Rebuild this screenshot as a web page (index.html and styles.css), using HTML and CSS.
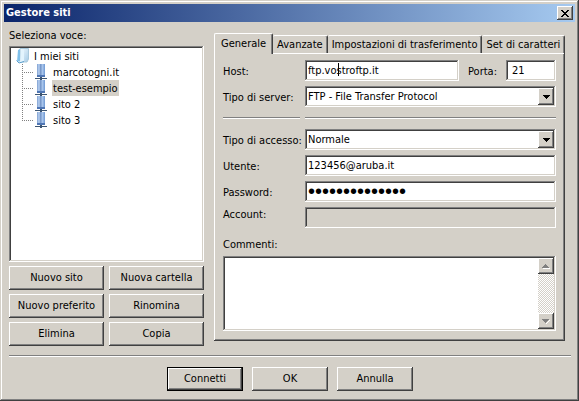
FILE: index.html
```html
<!DOCTYPE html>
<html lang="it">
<head>
    <meta charset="UTF-8">
    <meta name="viewport" content="width=device-width, initial-scale=1.0">
    <title>Gestore siti</title>
    <link rel="stylesheet" href="styles.css">
</head>
<body>
    <div class="window">
        <header class="titlebar">
            <h1>Gestore siti</h1>
            <button type="button" class="close-btn" aria-label="Chiudi">
                <svg width="8" height="7" viewBox="0 0 8 7" shape-rendering="crispEdges"><path d="M0 0h2v1h1v1h2V1h1V0h2v1H7v1H6v1H5v1h1v1h1v1h1v1H6V6H5V5H3v1H2v1H0V6h1V5h1V4h1V3H2V2H1V1H0z"/></svg>
            </button>
        </header>

        <main class="content">
            <section class="sites">
                <h2>Seleziona voce:</h2>
                <div class="tree">
                    <div class="tree-root">
                        <svg class="folder" width="14" height="16" viewBox="0 0 14 16">
                            <defs>
                                <linearGradient id="paper" x1="0" y1="0" x2="1" y2="1"><stop offset="0" stop-color="#f4fbff"/><stop offset="1" stop-color="#a5cbe6"/></linearGradient>
                            </defs>
                            <path d="M4 0.500h8.500v10.500L11 14H4z" fill="url(#paper)" stroke="#a9c9dc"/>
                            <path d="M2 2l2-1v12l-3 1z" fill="#7fc0ea"/>
                            <path d="M4 15l4-2V1L5 3z" fill="#e3f4fd"/>
                            <path d="M0.500 12.500L3 15l5-1.500" fill="none" stroke="#5c9fce"/>
                        </svg>
                        <span>I miei siti</span>
                    </div>
                    <ul>
                        <li><svg class="server"><use href="#server"/></svg><a href="#">marcotogni.it</a></li>
                        <li><svg class="server"><use href="#server"/></svg><a href="#" class="selected">test-esempio</a></li>
                        <li><svg class="server"><use href="#server"/></svg><a href="#">sito 2</a></li>
                        <li><svg class="server"><use href="#server"/></svg><a href="#">sito 3</a></li>
                    </ul>
                </div>
                <div class="site-buttons">
                    <button type="button">Nuovo sito</button>
                    <button type="button">Nuova cartella</button>
                    <button type="button">Nuovo preferito</button>
                    <button type="button">Rinomina</button>
                    <button type="button">Elimina</button>
                    <button type="button">Copia</button>
                </div>
            </section>

            <section class="settings">
                <div class="tabs" role="tablist">
                    <button type="button" class="tab active" role="tab" aria-selected="true">Generale</button>
                    <button type="button" class="tab" role="tab">Avanzate</button>
                    <button type="button" class="tab" role="tab">Impostazioni di trasferimento</button>
                    <button type="button" class="tab" role="tab">Set di caratteri</button>
                </div>
                <form class="panel">
                    <div class="row">
                        <label for="host">Host:</label>
                        <div class="host-fields">
                            <div class="field">
                                <input type="text" id="host" value="ftp.vostroftp.it">
                                <span class="caret"></span>
                            </div>
                            <label for="port">Porta:</label>
                            <input type="text" id="port" class="port" value="21">
                        </div>
                    </div>
                    <div class="row">
                        <label for="server-type">Tipo di server:</label>
                        <div class="field">
                            <select id="server-type"><option>FTP - File Transfer Protocol</option></select>
                            <span class="arrow-btn drop"><svg width="7" height="4" viewBox="0 0 7 4" shape-rendering="crispEdges"><path d="M0 0h7v1H6v1H5v1H4v1H3V3H2V2H1V1H0z"/></svg></span>
                        </div>
                    </div>
                    <div class="row divider">
                        <span class="line"></span>
                        <span class="line"></span>
                    </div>
                    <div class="row">
                        <label for="access">Tipo di accesso:</label>
                        <div class="field">
                            <select id="access"><option>Normale</option></select>
                            <span class="arrow-btn drop"><svg width="7" height="4" viewBox="0 0 7 4" shape-rendering="crispEdges"><path d="M0 0h7v1H6v1H5v1H4v1H3V3H2V2H1V1H0z"/></svg></span>
                        </div>
                    </div>
                    <div class="row">
                        <label for="user">Utente:</label>
                        <input type="text" id="user" value="123456@aruba.it">
                    </div>
                    <div class="row">
                        <label for="pass">Password:</label>
                        <input type="password" id="pass" value="abcdefghilmnop">
                    </div>
                    <div class="row account">
                        <label for="account">Account:</label>
                        <input type="text" id="account" disabled>
                    </div>
                    <label for="comments" class="comments-label">Commenti:</label>
                    <div class="comments">
                        <textarea id="comments"></textarea>
                        <div class="scrollbar">
                            <span class="arrow-btn"><svg width="8" height="5" viewBox="0 0 8 5" shape-rendering="crispEdges"><path d="M1 4h7v1H1z" fill="#fff"/><path d="M3 0h1v1h1v1h1v1h1v1H0V3h1V2h1V1h1z" fill="#808080"/></svg></span>
                            <span class="arrow-btn"><svg width="8" height="5" viewBox="0 0 8 5" shape-rendering="crispEdges"><path d="M7 1h1v1H7v1H6v1H5v1H4V4h1V3h1V2h1z" fill="#fff"/><path d="M0 0h7v1H6v1H5v1H4v1H3V3H2V2H1V1H0z" fill="#808080"/></svg></span>
                        </div>
                    </div>
                </form>
            </section>
        </main>

        <footer class="actions">
            <button type="button" class="default">Connetti</button>
            <button type="button">OK</button>
            <button type="button">Annulla</button>
        </footer>
    </div>

    <svg width="0" height="0" class="symbols">
        <linearGradient id="case" x1="0" y1="0" x2="1" y2="0"><stop offset="0" stop-color="#7f9fd0"/><stop offset="0.25" stop-color="#b9d2f2"/><stop offset="0.5" stop-color="#6486bd"/><stop offset="0.62" stop-color="#b4cff2"/><stop offset="1" stop-color="#6f98d2"/></linearGradient>
        <symbol id="server" viewBox="0 0 12 16">
            <rect x="2" y="0" width="8" height="13" fill="url(#case)"/>
            <path d="M2 11h8v2H2z" fill="#4e75b3"/>
            <path d="M5 13h2v1h5v1H7v1H5v-1H0v-1h5z" fill="#3c5572"/>
        </symbol>
    </svg>
</body>
</html>
```
FILE: styles.css
```css
* {
    box-sizing: border-box;
}

body {
    margin: 0;
    background: #d4d0c8;
    color: #000;
    font-family: "DejaVu Sans Condensed", "DejaVu Sans", sans-serif;
    font-size: 11px;
    line-height: 14px;
}

h1, h2 {
    margin: 0;
    font-size: 11px;
}

button, input, select, textarea {
    margin: 0;
    font: inherit;
    color: inherit;
    border: none;
    border-radius: 0;
    outline: none;
}

.window {
    display: flex;
    flex-direction: column;
    min-height: 100vh;
    padding: 4px;
    box-shadow: inset -1px -1px #404040, inset 1px 1px #d4d0c8, inset -2px -2px #808080, inset 2px 2px #fff;
}

/* title bar */
.titlebar {
    display: flex;
    align-items: center;
    justify-content: space-between;
    height: 18px;
    padding: 0 2px;
    background: linear-gradient(to right, #0a246a, #a6caf0);
    color: #fff;
}

.close-btn {
    display: flex;
    align-items: center;
    justify-content: center;
    width: 16px;
    height: 14px;
    padding: 0;
    color: #000;
}

/* raised surfaces */
button, .arrow-btn {
    background: #d4d0c8;
    box-shadow: inset -1px -1px #404040, inset 1px 1px #fff, inset -2px -2px #808080;
}

/* sunken surfaces */
input, select, .tree, .comments {
    background: #fff;
    box-shadow: inset -1px -1px #fff, inset 1px 1px #808080, inset -2px -2px #d4d0c8, inset 2px 2px #404040;
}

.content {
    display: grid;
    grid-template-columns: 195px 1fr;
    gap: 10px;
    padding: 7px 10px 0 5px;
}

.sites {
    display: flex;
    flex-direction: column;
}

.sites h2 {
    font-weight: normal;
    margin-bottom: 3px;
}

.tree {
    flex: 1;
    padding: 2px;
}

.tree-root {
    display: flex;
    align-items: center;
    gap: 4px;
    height: 16px;
    padding-left: 5px;
}

.tree-root span {
    padding-top: 1px;
}

.tree ul {
    list-style: none;
    margin: 0;
    padding: 0 0 0 11px;
}

.tree li {
    display: flex;
    align-items: center;
    height: 16px;
    background:
        repeating-linear-gradient(to right, #808080 0 1px, transparent 1px 2px) 0 8px / 12px 1px no-repeat,
        repeating-linear-gradient(to bottom, #808080 0 1px, transparent 1px 2px) 0 0 / 1px 16px no-repeat;
}

.tree li:last-child {
    background-size: 12px 1px, 1px 9px;
}

.server {
    width: 12px;
    height: 16px;
    margin: 0 5px 0 13px;
}

.tree a {
    padding: 2px 1px 0;
    color: #000;
    text-decoration: none;
}

.tree a.selected {
    background: #d4d0c8;
}

.site-buttons {
    display: grid;
    grid-template-columns: 1fr 1fr;
    gap: 4px 5px;
    margin-top: 4px;
}

.site-buttons button,
.actions button {
    height: 24px;
    padding: 0;
}

/* tabs */
.settings {
    min-width: 0;
    padding: 4px 0 5px;
}

.tabs {
    display: flex;
    align-items: flex-end;
}

.tab {
    height: 18px;
    padding: 0 4px;
    border-top: 1px solid #fff;
    border-right: 1px solid #404040;
    border-radius: 2px 2px 0 0;
    box-shadow: inset -1px 0 #808080;
    white-space: nowrap;
}

.tab.active {
    height: 21px;
    margin-bottom: -1px;
    padding: 0 6px 1px;
    border-left: 1px solid #fff;
    z-index: 1;
}

.panel {
    padding: 7px 9px 10px;
    box-shadow: inset -1px -1px #404040, inset 1px 1px #fff, inset -2px -2px #808080;
}

.row {
    display: grid;
    grid-template-columns: 77px 1fr;
    gap: 5px;
    align-items: center;
    height: 21px;
    margin-bottom: 5px;
    white-space: nowrap;
}

.row label {
    padding-top: 2px;
}

.row.account label {
    padding: 0 0 6px;
}

.row.divider {
    height: 12px;
}

.line {
    height: 2px;
    border-top: 1px solid #808080;
    border-bottom: 1px solid #fff;
}

.field {
    position: relative;
    flex: 1;
    min-width: 0;
}

.host-fields {
    display: flex;
    align-items: center;
    gap: 9px;
}

input, select {
    display: block;
    width: 100%;
    height: 21px;
    padding: 0 4px 1px 3px;
}

select {
    appearance: none;
    padding: 1px 20px 0 3px;
}

.host-fields .port {
    width: 50px;
    padding-left: 6px;
}

input[type="password"] {
    font-family: "Liberation Sans", sans-serif;
    font-size: 20px;
}

input:disabled {
    background: #d4d0c8;
}

.caret {
    position: absolute;
    top: 3px;
    left: 33px;
    width: 1px;
    height: 13px;
    background: #000;
}

.arrow-btn {
    display: flex;
    align-items: center;
    justify-content: center;
    width: 16px;
    height: 16px;
}

.arrow-btn.drop {
    position: absolute;
    top: 2px;
    right: 2px;
    height: 17px;
    pointer-events: none;
}

.comments-label {
    display: block;
    padding: 5px 0 4px;
}

.comments {
    display: flex;
    height: 75px;
    padding: 2px;
}

.comments textarea {
    flex: 1;
    min-width: 0;
    padding: 1px;
    resize: none;
    background: transparent;
}

.scrollbar {
    display: flex;
    flex-direction: column;
    justify-content: space-between;
    background: repeating-conic-gradient(#d4d0c8 0 25%, #fff 0 50%) 0 0 / 2px 2px;
}

/* bottom buttons */
.actions {
    display: flex;
    justify-content: center;
    gap: 9px;
    margin: 9px 4px 0 5px;
    padding-top: 11px;
    border-top: 1px solid #808080;
    box-shadow: inset 0 1px #fff;
}

.actions button {
    width: 76px;
}

.actions .default {
    border: 1px solid #000;
}

.symbols {
    position: absolute;
}
```
